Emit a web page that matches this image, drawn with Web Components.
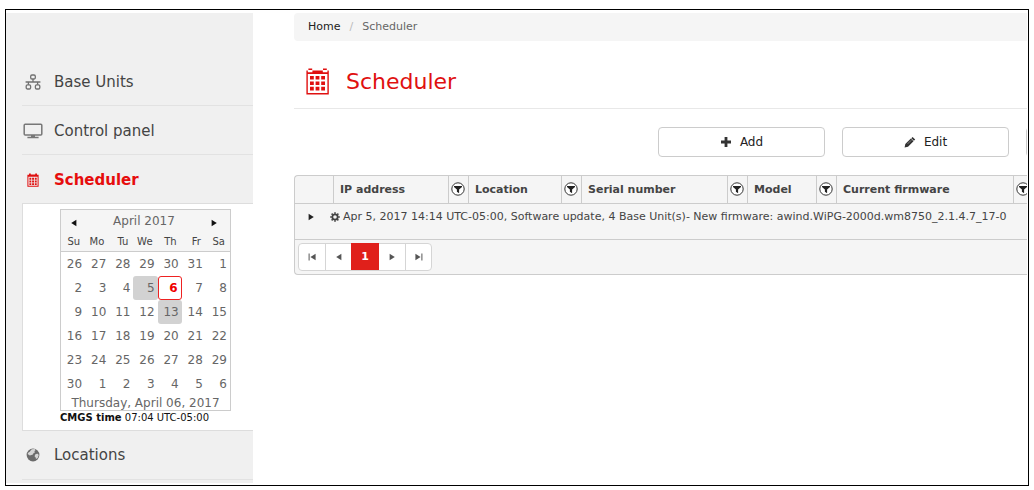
<!DOCTYPE html>
<html lang="en">
<head>
<meta charset="utf-8">
<title>Scheduler</title>
<style>
  body { margin: 0; background: #fff; color: #444; font-family: "DejaVu Sans", Verdana, sans-serif; font-size: 11px; }
</style>
</head>
<body>
<app-frame>
  <side-nav slot="nav">
    <nav-item icon="network">Base Units</nav-item>
    <nav-item icon="monitor">Control panel</nav-item>
    <nav-item icon="calendar" current>Scheduler</nav-item>
    <nav-panel><month-calendar></month-calendar><server-time>07:04 UTC-05:00</server-time></nav-panel>
    <nav-item icon="globe">Locations</nav-item>
  </side-nav>
  <bread-crumb></bread-crumb>
  <page-title>Scheduler</page-title>
  <tool-bar>
    <tool-button icon="plus">Add</tool-button>
    <tool-button icon="pencil">Edit</tool-button>
    <tool-button label="Delete"></tool-button>
  </tool-bar>
  <schedule-grid></schedule-grid>
</app-frame>

<script>
const ICONS = {
  network: [16, 16, '<g fill="none" stroke="#707070" stroke-width="1.3"><rect x="5.7" y="1" width="4.6" height="4" rx="1.3"/><rect x="1.2" y="10.8" width="4.4" height="4.2" rx="1.3"/><rect x="10.4" y="10.8" width="4.4" height="4.2" rx="1.3"/><path d="M8 5v3M.6 8h14.8M3.4 8v2.8M12.6 8v2.8"/></g>'],
  monitor: [20, 16, '<rect x="1.2" y="1.2" width="17.6" height="10.8" rx="1" fill="none" stroke="#777" stroke-width="1.5"/><path fill="#777" d="M8 12h4v2H8zM4.4 13.8h11.2v1.4H4.4z"/>'],
  calendar: [12, 14, '<g fill="#e01010"><path fill-rule="evenodd" d="M.4 1.8H2V.4h1.8v1h4.4v-1H10v1.4h1.6v12H.4zM1.4 3.8v9h9.2v-9z"/><path d="M2.4 4.8h1.9v1.9H2.4zM5.1 4.8H7v1.9H5.1zM7.8 4.8h1.9v1.9H7.8zM2.4 7.5h1.9v1.9H2.4zM5.1 7.5H7v1.9H5.1zM7.8 7.5h1.9v1.9H7.8zM2.4 10.2h1.9V12H2.4zM5.1 10.2H7V12H5.1zM7.8 10.2h1.9V12H7.8z"/></g>'],
  calendarLarge: [24, 28, '<g fill="#e01010"><path fill-rule="evenodd" d="M.4 2.4h22.4v24H.4zM1.8 6v19h19.6V6z"/><path fill="#fff" d="M1.8 1h4.6v3.2H1.8zM16.8 1h4.6v3.2h-4.6z"/><path d="M2.4.6h3.8v1.4H2.4zM17 .6h3.8v1.4H17zM4 8h3.8v3.6H4zM9.6 8h3.8v3.6H9.6zM15.2 8H19v3.6h-3.8zM4 13.4h3.8V17H4zM9.6 13.4h3.8V17H9.6zM15.2 13.4H19V17h-3.8zM4 18.8h3.8v3.6H4zM9.6 18.8h3.8v3.6H9.6zM15.2 18.8H19v3.6h-3.8z"/></g>'],
  globe: [14, 14, '<circle cx="7" cy="7" r="6.4" fill="#6b6b6b"/><path fill="#f0f0f0" d="M5.8 1.3 8.6 1l1 1-1.3 1.2.8 1-1.5.8-.7 1.5L5.4 7l-1.6.4L1.6 6l.6-1.2L4 3.6l.6-1zM9.6 6l2.4-.2.7 1.5-1 2.6-1.7 1-.5-1.6-1-1z" opacity=".8"/>'],
  plus: [12, 12, '<path fill="#333" d="M4.6 1h2.8v3.6H11v2.8H7.4V11H4.6V7.4H1V4.6h3.6z"/>'],
  pencil: [12, 12, '<path fill="#333" d="m8.6.9 2.6 2.6-1.3 1.3-2.6-2.6zM6.9 2.6l2.6 2.6L4 10.7l-3.4.8.7-3.4z"/><path stroke="#fff" stroke-width=".4" d="M3.6 7.9 7.2 4.3"/>'],
  filter: [14, 14, '<circle cx="7" cy="7" r="6.2" fill="#fff" stroke="#333" stroke-width="1"/><path fill="#222" d="M3 4h8v1L8.1 7.6v3.6L5.9 9.8V7.6L3 5z"/>'],
  gear: [10, 10, '<circle cx="5" cy="5" r="2.7" fill="none" stroke="#444" stroke-width="1.8"/><path stroke="#444" stroke-width="1.6" d="M5 .2v1.6M5 8.2v1.6M.2 5h1.6M8.2 5h1.6M1.6 1.6l1.2 1.2M7.2 7.2l1.2 1.2M8.4 1.6 7.2 2.8M1.6 8.4l1.2-1.2"/>'],
  right: [8, 8, '<path fill="currentColor" d="M1.6.8 6.8 4 1.6 7.2z"/>'],
  left: [8, 8, '<path fill="currentColor" d="M6.4.8 1.2 4l5.2 3.2z"/>'],
  first: [8, 8, '<path fill="currentColor" d="M7.6.8 2.4 4l5.2 3.2zM.6.4h1v7.2h-1z"/>'],
  last: [8, 8, '<path fill="currentColor" d="M.4.8 5.6 4 .4 7.2zM6.4.4h1v7.2h-1z"/>']
};
const icon = name => {
  const [w, h, body] = ICONS[name];
  return `<svg class="icon" width="${w}" height="${h}" viewBox="0 0 ${w} ${h}" aria-hidden="true">${body}</svg>`;
};
const define = (tag, render) => customElements.define(tag, class extends HTMLElement {
  connectedCallback() {
    if (this.shadowRoot) return;
    this.attachShadow({ mode: 'open' }).innerHTML =
      '<style>*{box-sizing:border-box}:host{display:block;box-sizing:border-box}svg{display:block;flex:none}button{font:inherit;color:inherit;margin:0;padding:0;cursor:pointer}a{color:inherit;text-decoration:none}</style>' + render(this);
  }
});

define('app-frame', () => `
<style>
  :host { display: grid; grid-template-columns: 247px minmax(0, 1fr); column-gap: 41px; margin: 9px 5px 4px; border: 1px solid #000; padding: 3px 1px 2px 0; min-height: calc(100vh - 13px); overflow: hidden; }
  main { overflow: hidden; }
</style>
<slot name="nav"></slot><main><slot></slot></main>`);

define('side-nav', () => `
<style>:host { background: #f0f0f0; padding: 44px 0 0 16px; }</style><nav><slot></slot></nav>`);

define('nav-item', el => `
<style>
  a { display: flex; align-items: center; gap: 10px; height: 49px; padding-top: 1px; border-bottom: 1px solid #e2e2e2; font-size: 15px; color: #444; }
  .mark { display: flex; justify-content: center; width: 22px; }
  :host([current]) a { color: #e60d0d; font-weight: bold; border-bottom-color: #ddd; }
</style>
<a href="#" ${el.hasAttribute('current') ? 'aria-current="page"' : ''}><span class="mark">${icon(el.getAttribute('icon'))}</span><slot></slot></a>`);

define('nav-panel', () => `
<style>:host { background: #fff; border: solid #ddd; border-width: 0 0 1px 1px; padding: 5px 22px 5px 37px; }</style><slot></slot>`);

define('server-time', () => `
<style>:host { font-size: 10px; line-height: 14px; color: #111; white-space: nowrap; }</style><b>CMGS time</b> <slot></slot>`);

define('month-calendar', () => {
  const days = [26,27,28,29,30,31,1,2,3,4,5,6,7,8,9,10,11,12,13,14,15,16,17,18,19,20,21,22,23,24,25,26,27,28,29,30,1,2,3,4,5,6];
  const mark = { 10: 'busy', 11: 'today', 18: 'busy' };
  let rows = '';
  for (let r = 0; r < 6; r++) {
    rows += '<tr>' + days.slice(r * 7, r * 7 + 7).map((d, c) => `<td><span class="${mark[r * 7 + c] || ''}">${d}</span></td>`).join('') + '</tr>';
  }
  return `
<style>
  :host { border: 1px solid #ccc; width: 171px; color: #666; font-size: 12px; }
  .head { background: #f5f5f5; display: flex; align-items: center; justify-content: space-between; height: 22px; padding: 0 12px 0 9px; }
  .head button { border: 0; background: none; color: #111; height: 16px; padding: 4px 0 0; }
  table { width: 100%; border-collapse: collapse; table-layout: fixed; }
  th { height: 19px; padding: 0 5px 0 0; background: #f5f5f5; font-size: 10px; font-weight: normal; text-align: right; color: #444; border-bottom: 1px solid #ccc; }
  td { height: 24px; padding: 0; text-align: right; }
  span { display: block; height: 24px; line-height: 24px; padding-right: 3px; }
  .busy { background: #d2d2d2; border-radius: 3px; }
  .today { background: #fff; border: 1px solid #e22; border-radius: 3px; color: #f00000; font-weight: bold; line-height: 22px; }
  .foot { text-align: center; line-height: 14px; white-space: nowrap; }
</style>
<div class="head"><button aria-label="Previous month">${icon('left')}</button><div>April 2017</div><button aria-label="Next month">${icon('right')}</button></div>
<table><thead><tr>${['Su','Mo','Tu','We','Th','Fr','Sa'].map(d => `<th>${d}</th>`).join('')}</tr></thead><tbody>${rows}</tbody></table>
<div class="foot">Thursday, April 06, 2017</div>`;
});

define('bread-crumb', () => `
<style>
  :host { background: #f5f5f5; border-radius: 4px 0 0 4px; padding: 0 14px; line-height: 28px; font-size: 11px; }
  nav { display: flex; gap: 9px; }
  a { color: #222; } i { font-style: normal; color: #bbb; } span { color: #666; }
</style>
<nav aria-label="Breadcrumb"><a href="#">Home</a><i>/</i><span>Scheduler</span></nav>`);

define('page-title', () => `
<style>
  :host { display: flex; align-items: center; gap: 16px; margin-top: 14px; height: 54px; padding-left: 12px; border-bottom: 1px solid #e8e8e8; }
  h1 { margin: 0; font-size: 22px; font-weight: normal; color: #e01010; }
</style>
${icon('calendarLarge')}<h1><slot></slot></h1>`);

define('tool-bar', () => `
<style>:host { display: grid; grid-template-columns: 167px 167px 1px; column-gap: 17px; justify-content: end; margin: 18px 0; }</style><slot></slot>`);

define('tool-button', el => `
<style>
  :host { min-width: 0; }
  button { display: flex; align-items: center; justify-content: center; gap: 8px; width: 100%; min-width: 167px; height: 30px; border: 1px solid #ccc; border-radius: 4px; background: #fff; color: #222; font-size: 12px; }
</style>
<button ${el.hasAttribute('label') ? `aria-label="${el.getAttribute('label')}"` : ''}>${el.hasAttribute('icon') ? icon(el.getAttribute('icon')) : ''}<slot></slot></button>`);

define('schedule-grid', () => {
  const cols = [['IP address', 115], ['Location', 93], ['Serial number', 146], ['Model', 69], ['Current firmware', 177]];
  return `
<style>
  :host { background: #f5f5f5; border: solid #ccc; border-width: 1px 0 1px 1px; border-radius: 4px 0 0 4px; color: #444; overflow: hidden; }
  table { width: 100%; border-collapse: separate; border-spacing: 0; table-layout: fixed; }
  th { height: 28px; padding: 0 0 1px 6px; text-align: left; font-size: 11px; white-space: nowrap; border-left: 1px solid #ccc; border-bottom: 1px solid #ccc; }
  th:first-child { border-left: 0; }
  th.f { padding: 1px 0 0 2px; }
  button { border: 0; background: none; }
  td { height: 36px; padding: 5px 0 0 12px; vertical-align: top; border-bottom: 1px solid #ccc; }
  .line { display: flex; align-items: center; line-height: 16px; font-size: 11px; white-space: nowrap; }
  .line button { color: #222; margin-right: 15px; }
  .line > span { margin-left: 3px; }
</style>
<table>
  <colgroup><col style="width:38px">${cols.map(c => `<col style="width:${c[1]}px"><col style="width:20px">`).join('').replace(/<col style="width:20px">$/, '<col>')}</colgroup>
  <thead><tr><th></th>${cols.map(c => `<th scope="col">${c[0]}</th><th class="f"><button aria-label="Filter ${c[0]}">${icon('filter')}</button></th>`).join('')}</tr></thead>
  <tbody><tr><td colspan="11"><div class="line"><button aria-label="Expand">${icon('right')}</button>${icon('gear')}<span>Apr 5, 2017 14:14 UTC-05:00, Software update, 4 Base Unit(s)- New firmware: awind.WiPG-2000d.wm8750_2.1.4.7_17-0</span></div></td></tr></tbody>
</table>
<page-navigator></page-navigator>`;
});

define('page-navigator', () => `
<style>
  :host { padding: 3px; }
  nav { display: inline-flex; vertical-align: top; height: 28px; border: 1px solid #d5d5d5; border-radius: 4px; background: #fff; color: #555; }
  button { width: 26px; border: 0; background: none; display: flex; align-items: center; justify-content: center; }
  .rule { border-left: 1px solid #d5d5d5; }
  .now { width: 28px; margin: -1px 0 0; background: #e0201b; color: #fff; font-size: 11px; font-weight: bold; }
</style>
<nav aria-label="Pages"><button aria-label="First page">${icon('first')}</button><button class="rule" aria-label="Previous page">${icon('left')}</button><button class="now" aria-current="page">1</button><button aria-label="Next page">${icon('right')}</button><button class="rule" aria-label="Last page">${icon('last')}</button></nav>`);
</script>
</body>
</html>
